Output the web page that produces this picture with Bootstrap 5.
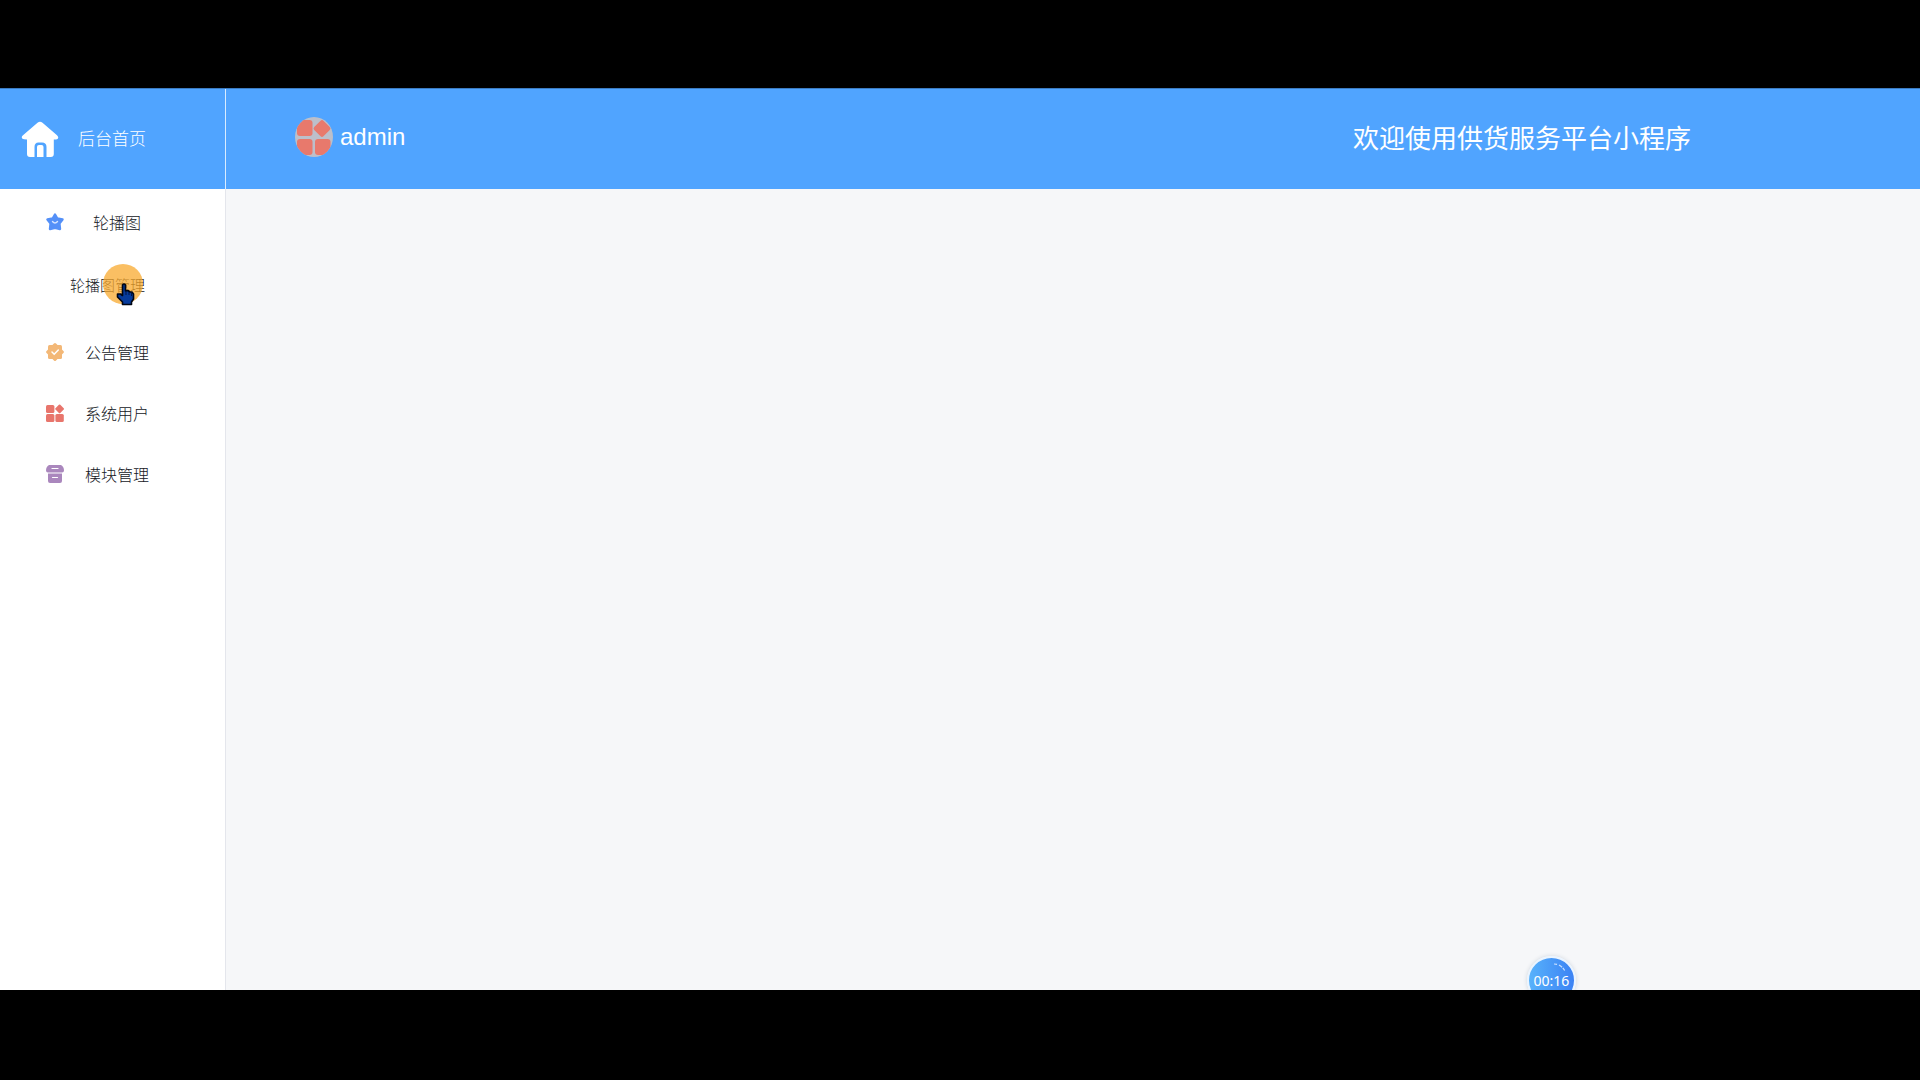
<!DOCTYPE html>
<html lang="zh-CN">
<head>
<meta charset="utf-8">
<meta name="viewport" content="width=device-width, initial-scale=1">
<title>后台首页</title>
<link href="https://cdn.jsdelivr.net/npm/bootstrap@5.3.0/dist/css/bootstrap.min.css" rel="stylesheet">
<style>
  body { background: #000; font-family: "Liberation Sans", "Noto Sans CJK SC", sans-serif; line-height: 24px; }
  .stage { padding: 88px 0 90px; }
  .screen { background: #f6f7f9; }
  .topbar { background: #50a4ff; height: 101px; border-top: 1px solid #3c7cc2; }
  .side-w { width: 226px; }
  .brand-link { border-right: 1px solid #d9ecff; padding-left: 21px; gap: 19px; font-size: 17px; font-weight: 300; }
  .brand-link span { padding-top: 2px; }
  .user-link { margin-left: 69px; padding-bottom: 4px; gap: 7px; font-size: 24px; }
  .avatar { width: 38px; height: 40px; }
  .welcome { font-size: 26px; line-height: 36px; margin-right: 229px; }
  .sidebar { background: #fff; border-right: 1px solid #e4e6ec; padding-top: 4px; font-weight: 300; }
  .menu-link { height: 61px; padding-left: 46px; font-size: 16px; color: #14171d; }
  .menu-link svg { margin-bottom: 4px; }
  .menu-text { width: 106px; text-align: center; }
  .sub-link { height: 64px; padding-left: 70px; font-size: 15px; color: #14171d; }
  .sub-list { padding-bottom: 5px; }
  .pointer-mark { left: 102px; top: 74px; pointer-events: none; }
  .timer { left: 1527px; bottom: -15px; width: 49px; height: 49px; border: 2px solid #eaf4ff; border-radius: 50%;
    background: linear-gradient(90deg, #58b2fb, #3b82f4); box-shadow: 0 0 4px #cfd5dd;
    font: 14px/20px "Noto Sans", sans-serif; color: #fff; }
  .timer svg { left: 24px; top: 4px; }
</style>
<script src="https://cdn.jsdelivr.net/npm/bootstrap@5.3.0/dist/js/bootstrap.bundle.min.js"></script>
</head>
<body>
<div class="stage vh-100 d-flex flex-column">
  <div class="screen flex-fill d-flex flex-column position-relative overflow-hidden">
    <header class="topbar d-flex text-white flex-shrink-0">
      <a href="#" class="brand-link side-w d-flex align-items-center text-white text-decoration-none">
        <svg width="38" height="38" viewBox="0 0 38 38" aria-hidden="true">
          <path fill="#fff" d="M16.500 2.800Q19 .7 21.500 2.800L36 15.200Q38.200 17.300 36.500 19Q35.700 19.600 32.800 19.600V34Q32.800 37 29.800 37H25.500V27Q25.500 22.500 21 22.500H17.500Q13.500 22.500 13.500 27V37H9Q6 37 6 34V19.600Q2.400 19.600 1.500 18.800Q-.2 17.200 2 15.200Z"/>
          <path fill="#fff" d="M16 37V27Q16 25 18 25H20.500Q22.500 25 22.500 27V37Z"/>
        </svg>
        <span>后台首页</span>
      </a>
      <a href="#" class="user-link d-flex align-items-center text-white text-decoration-none">
        <svg class="avatar" viewBox="0 0 38 40" aria-hidden="true">
          <defs><clipPath id="face"><ellipse cx="19" cy="20" rx="19" ry="20"/></clipPath></defs>
          <g clip-path="url(#face)">
            <rect width="38" height="40" fill="#bcbfca"/>
            <g fill="#e8796c">
              <rect x="2" y="3" width="15.500" height="16" rx="3"/>
              <rect x="2" y="22" width="15.500" height="16" rx="3"/>
              <rect x="20" y="22" width="15.500" height="16" rx="3"/>
              <rect x="20.500" y="5" width="13" height="13" rx="2" transform="rotate(45 27 11.500)"/>
            </g>
          </g>
        </svg>
        <span>admin</span>
      </a>
      <div class="welcome ms-auto align-self-center">欢迎使用供货服务平台小程序</div>
    </header>
    <div class="flex-fill d-flex">
      <nav class="sidebar side-w position-relative">
        <ul class="list-unstyled mb-0">
          <li>
            <a href="#" class="menu-link d-flex align-items-center text-decoration-none">
              <svg width="18" height="18" viewBox="0 0 18 18" aria-hidden="true">
                <path fill="#5490f8" stroke="#5490f8" stroke-width="2.400" stroke-linejoin="round" d="M9 1.500L11.300 5.500L16.500 6.500L13.400 10.500L14 16L9 14.800L4 16L4.600 10.500L1.500 6.500L6.700 5.500Z"/>
                <path fill="none" stroke="#d5e4ff" stroke-width="1.400" stroke-linecap="round" d="M6.500 8.500Q9 11.500 11.500 8.500"/>
              </svg>
              <span class="menu-text">轮播图</span>
            </a>
            <ul class="sub-list list-unstyled">
              <li><a href="#" class="sub-link d-flex align-items-center text-decoration-none">轮播图管理</a></li>
            </ul>
          </li>
          <li>
            <a href="#" class="menu-link d-flex align-items-center text-decoration-none">
              <svg width="18" height="18" viewBox="0 0 18 18" aria-hidden="true">
                <g fill="#f3b877"><rect x="2" y="2" width="14" height="14" rx="1.500"/><rect x="2.300" y="2.300" width="13.400" height="13.400" rx="1.500" transform="rotate(45 9 9)"/></g>
                <path fill="none" stroke="#fff" stroke-width="1.500" stroke-linecap="round" d="M6 9L8.200 11.200L12.300 7"/>
              </svg>
              <span class="menu-text">公告管理</span>
            </a>
          </li>
          <li>
            <a href="#" class="menu-link d-flex align-items-center text-decoration-none">
              <svg width="18" height="18" viewBox="0 0 18 18" fill="#e8756c" aria-hidden="true">
                <rect x="0" y="1" width="8.400" height="8" rx="1.500"/><rect x="0" y="10" width="8.400" height="8" rx="1.500"/><rect x="9.400" y="10" width="8.400" height="8" rx="1.500"/><rect x="10.200" y="1.500" width="6.800" height="6.800" rx="1" transform="rotate(45 13.600 4.900)"/>
              </svg>
              <span class="menu-text">系统用户</span>
            </a>
          </li>
          <li>
            <a href="#" class="menu-link d-flex align-items-center text-decoration-none">
              <svg width="18" height="18" viewBox="0 0 18 18" aria-hidden="true">
                <path fill="#aa87bd" d="M3 0H15Q18 1.500 18 5.500Q18 7.500 16 7.500H2Q0 7.500 0 5.500Q0 1.500 3 0ZM2 8.500H16V16Q16 18 14 18H4Q2 18 2 16Z"/>
                <path stroke="#fff" stroke-width="1.200" stroke-linecap="round" d="M6 3.500H12M6.500 12.500H11.500"/>
              </svg>
              <span class="menu-text">模块管理</span>
            </a>
          </li>
        </ul>
        <svg class="pointer-mark position-absolute" width="42" height="44" viewBox="0 0 42 44" aria-hidden="true">
          <circle cx="21" cy="21" r="20" fill="#f8a92c" fill-opacity=".74"/>
          <path fill="#063b9c" stroke="#000614" stroke-width="1.600" stroke-linejoin="round" d="M20.500 22Q22 20 23.500 22V28L26 27.500L28 29L30 29L31.500 31V36L29.500 39V41.500H20.500V39L15.500 34V31H18.500L20.500 32.500Z"/>
          <path fill="none" stroke="#001444" d="M24 28V32M27 29V32M29.500 30V33"/>
        </svg>
      </nav>
      <main class="flex-fill"></main>
    </div>
    <div class="timer position-absolute d-flex align-items-center justify-content-center">
      <svg class="position-absolute" width="16" height="12" viewBox="0 0 16 12" aria-hidden="true"><path fill="none" stroke="#c9e0ff" stroke-width="1.200" stroke-dasharray="3 2 4 1" d="M1 2Q8 2 12 9"/></svg>
      <span>00:16</span>
    </div>
  </div>
</div>
</body>
</html>
